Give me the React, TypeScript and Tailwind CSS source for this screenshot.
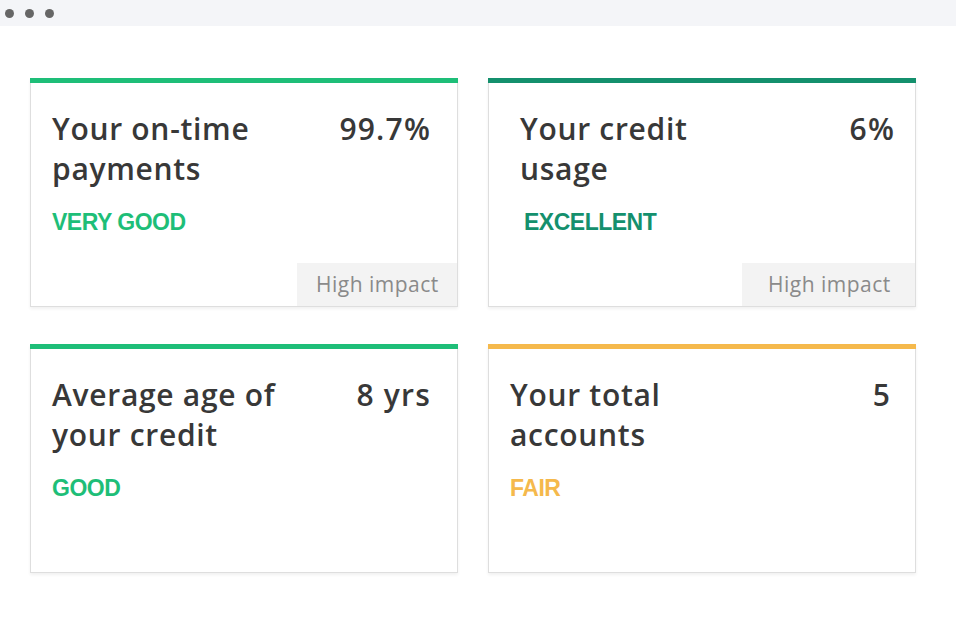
const cards = [
  { title: 'Your on-time payments', value: '99.7%', status: 'VERY GOOD', bar: 'bg-[#1ebe78]', color: 'text-[#1ebe78]', impact: 'w-[160px] pl-[19px]', pad: 'pl-[21px] pr-[26px]' },
  { title: 'Your credit usage', value: '6%', status: 'EXCELLENT', bar: 'bg-[#14906d]', color: 'text-[#14906d] ml-[4px]', impact: 'w-[173px] pl-[26px]', pad: 'pl-[31px] pr-[20px]' },
  { title: 'Average age of your credit', value: '8 yrs', status: 'GOOD', bar: 'bg-[#1ebe78]', color: 'text-[#1ebe78]', impact: '', pad: 'pl-[21px] pr-[26px]' },
  { title: 'Your total accounts', value: '5', status: 'FAIR', bar: 'bg-[#f5b94c]', color: 'text-[#f5b94c]', impact: '', pad: 'pl-[21px] pr-[24px]' },
];

const Card = ({ card }: { card: (typeof cards)[number] }) => (
  <div className="flex flex-col h-[229px] bg-white border-x border-b border-[#dedede] shadow-[0_2px_3px_rgba(0,0,0,0.06)]">
    <div className={`h-[5px] -mx-px ${card.bar}`} />
    <div className={`flex justify-between pt-[26px] ${card.pad}`}>
      <div>
        <div className="w-[262px] text-[30px] leading-[40px] font-semibold tracking-[0.7px] text-[#383838]">
          {card.title}
        </div>
        <div className={`mt-[19px] text-[23px] leading-[28px] font-bold tracking-[-0.5px] font-['Liberation_Sans',Arial,sans-serif] ${card.color}`}>
          {card.status}
        </div>
      </div>
      <div className="text-[30px] leading-[40px] font-semibold tracking-[1.2px] text-[#383838] whitespace-nowrap">
        {card.value}
      </div>
    </div>
    {card.impact && (
      <div className="mt-auto flex justify-end">
        <div className={`h-[43px] bg-[#f3f3f3] flex items-center text-[21px] tracking-[0.5px] text-[#8a8a8a] ${card.impact}`}>
          High impact
        </div>
      </div>
    )}
  </div>
);

const App = () => {
  return (
    <div className="w-[956px] h-[630px] bg-white font-['Open_Sans','Lato',sans-serif] overflow-hidden">
      <div className="h-[26px] bg-[#f4f5f8] flex items-center gap-[11px] pl-[5px]">
        <div className="w-[9px] h-[9px] rounded-full bg-[#666]" />
        <div className="w-[9px] h-[9px] rounded-full bg-[#666]" />
        <div className="w-[9px] h-[9px] rounded-full bg-[#666]" />
      </div>
      <div className="grid grid-cols-2 gap-x-[30px] gap-y-[37px] px-[30px] pr-[40px] pt-[52px]">
        {cards.map((card) => (
          <Card key={card.title} card={card} />
        ))}
      </div>
    </div>
  );
};

export default App;
